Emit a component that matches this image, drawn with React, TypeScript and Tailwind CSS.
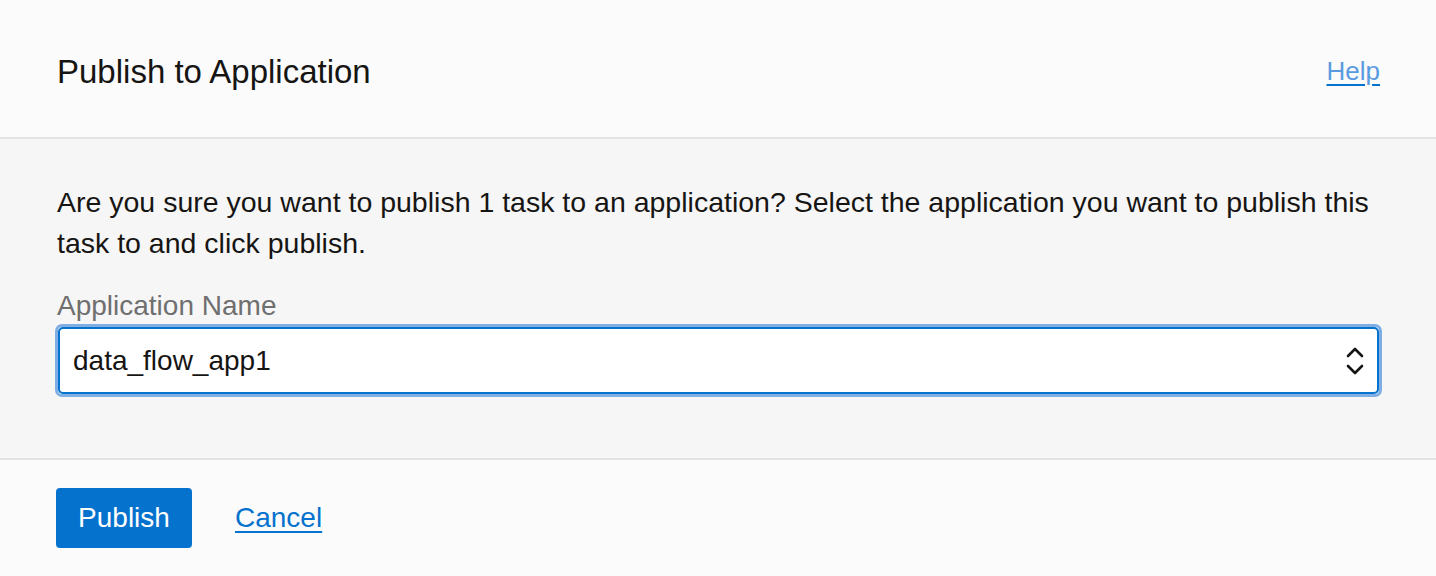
export default function App() {
  return (
    <main
      className="w-[1436px] h-[576px] bg-[#fbfbfb] flex flex-col"
      style={{ fontFamily: '"Liberation Sans", Arial, sans-serif' }}
    >
      <header className="h-[139px] shrink-0 flex items-center justify-between pl-[57px] pr-[56px] pt-[6px] border-b-2 border-[#e4e4e4]">
        <h1 className="text-[33px] text-[#161513]">Publish to Application</h1>
        <a href="#" className="text-[26px] text-[#5a9ae0] underline decoration-[#0572ce] underline-offset-4">
          Help
        </a>
      </header>

      <section className="h-[321px] shrink-0 bg-[#f6f6f6] border-b-2 border-[#e4e4e4] pl-[55px] pr-[54px] pt-[43px]">
        <p className="text-[28.5px] leading-[41px] text-[#161513] pl-[2px]">
          Are you sure you want to publish 1 task to an application? Select the application you want to publish this
          task to and click publish.
        </p>
        <label className="block mt-[27px] text-[28px] leading-[30px] text-[#6f6f6f] pl-[2px]">Application Name</label>
        <div className="mt-[3px] h-[73px] rounded-[7px] border-[3px] border-[#7eaee4]">
          <div className="h-full rounded-[5px] border-2 border-[#0572ce] bg-white flex items-center justify-between pl-[13px] pr-[13px]">
            <span className="text-[28px] text-[#161513]">data_flow_app1</span>
            <svg width="18" height="30" viewBox="0 0 18 30" fill="none" stroke="#161513" strokeWidth="2.6" strokeLinecap="round" strokeLinejoin="round">
              <path d="M2 10 L9 3 L16 10" />
              <path d="M2 20 L9 27 L16 20" />
            </svg>
          </div>
        </div>
      </section>

      <footer className="flex-1 flex items-center gap-[43px] px-[56px]">
        <button className="h-[60px] w-[136px] rounded-[4px] bg-[#0572ce] text-white text-[28px]">Publish</button>
        <a href="#" className="text-[28px] text-[#0572ce] underline underline-offset-4">
          Cancel
        </a>
      </footer>
    </main>
  )
}
